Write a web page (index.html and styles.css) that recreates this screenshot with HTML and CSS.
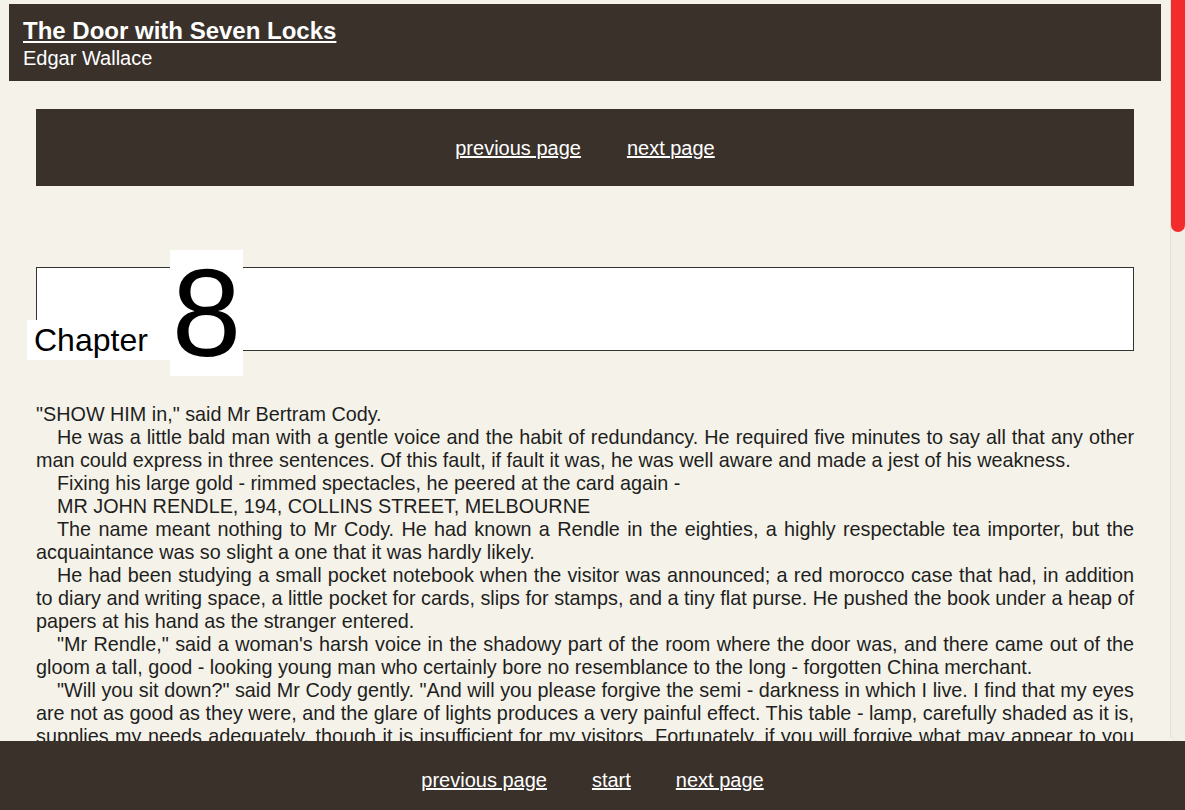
FILE: index.html
```html
<!DOCTYPE html>
<html>
<head>
    <meta charset="UTF-8">
    <title>The Door with Seven Locks - Chapter 8</title>
    <link rel="stylesheet" href="styles.css">
</head>
<body>

	<div class="reader">

	<div class="page">

	    <header class="book_head">
	        <h1><a href="#">The Door with Seven Locks</a></h1>
	        <div class="book_author">Edgar Wallace</div>
	    </header>

	    <div class="chapter">

	        <nav class="pager">
	            <a href="#">previous page</a>
	            <a href="#">next page</a>
	        </nav>

	        <div class="chapter_head">
	            <span class="chapter_label">Chapter</span><span class="chapter_num">8</span>
	        </div>

	        <div class="chapter_text">
	            <p class="first">"SHOW HIM in," said Mr Bertram Cody.</p>
	            <p>He was a little bald man with a gentle voice and the habit of redundancy. He required five minutes to say all that any other man could express in three sentences. Of this fault, if fault it was, he was well aware and made a jest of his weakness.</p>
	            <p>Fixing his large gold - rimmed spectacles, he peered at the card again -</p>
	            <p>MR JOHN RENDLE, 194, COLLINS STREET, MELBOURNE</p>
	            <p>The name meant nothing to Mr Cody. He had known a Rendle in the eighties, a highly respectable tea importer, but the acquaintance was so slight a one that it was hardly likely.</p>
	            <p>He had been studying a small pocket notebook when the visitor was announced; a red morocco case that had, in addition to diary and writing space, a little pocket for cards, slips for stamps, and a tiny flat purse. He pushed the book under a heap of papers at his hand as the stranger entered.</p>
	            <p>"Mr Rendle," said a woman's harsh voice in the shadowy part of the room where the door was, and there came out of the gloom a tall, good - looking young man who certainly bore no resemblance to the long - forgotten China merchant.</p>
	            <p>"Will you sit down?" said Mr Cody gently. "And will you please forgive the semi - darkness in which I live. I find that my eyes are not as good as they were, and the glare of lights produces a very painful effect. This table - lamp, carefully shaded as it is, supplies my needs adequately, though it is insufficient for my visitors. Fortunately, if you will forgive what may appear to you to be a boast, I have very little need of light to recognise a face, and none at all to recognise a voice."</p>
	            <p>Dick Martin sat down in the chair that was pushed forward for him. Of the woman who had shown him in he saw nothing more than a vague shape; he heard the door close softly behind her, and he was alone with the little man at the desk.</p>
	            <p>"You are from Melbourne, Mr Rendle? A beautiful city. I have never been there, but I have always understood that it is a beautiful city, and one which, in the opinion of those best qualified to judge, compares very favourably with any capital in Europe."</p>
	            <p>"I have been in Melbourne," said Dick carefully, "but I cannot claim to be an authority on its beauties. I came to see you on a matter which I think you will find of some interest."</p>
	            <p>Mr Cody folded his plump hands on the blotting - pad and inclined his head. It was a gesture that might have meant anything - attention, politeness, or merely the desire to rest his eyes from the light that fell upon the table.</p>
	            <p>"I am always interested," he said. "It is, if I may say so, one of the few pleasures that are left to a man of my years and my habits. I seldom go out; I see very few people; my correspondence is small. A visitor, therefore, is an event, and an event, however trivial it may prove, is a thing to be welcomed and, if possible, enjoyed."</p>
	            <p>"You knew the late Lord Selford?"</p>
	            <p>For a second the hands on the blotting - pad were still; then one of them moved to the lamp and tilted the shade a little, so that the light fell more fully upon the visitor's face.</p>
	            <p>"Lord Selford? Yes, I knew him - slightly. Very slightly. I was at one time his lordship's agent in a small matter of property, a house in Gloucestershire which he wished to let. That was many years ago, Mr Rendle, many years ago, and my memory, I am afraid, is not what it was."</p>
	            <p>"And his son - the present Lord Selford?"</p>
	            <p>Mr Cody shook his head slowly. "I have never had the pleasure of meeting the present lord. He is, I understand, a great traveller; one hears of him in Africa, in South America, in the East. A restless young man, but no doubt a very estimable one. Why do you ask?"</p>
	            <p>Dick did not answer at once. He was looking past the lamp to the wall behind, where the shadows lay thickest, and he had the uncomfortable sense that somebody stood there, watching and listening, though he could see no one.</p>
	            <p>"Because," he said at last, "I have reason to believe that you are one of the very few people in London who can tell me where he is to be found."</p>
	            <p>The little man laughed softly, and the sound of his laughter was so gentle and so kindly that for a moment Dick doubted the wisdom of his errand. Then Mr Cody leant forward, and the light caught the thick lenses of his spectacles, so that his eyes seemed to vanish behind two discs of white fire.</p>
	            <p>"My dear young man," he said, "you flatter me. You flatter me beyond anything I deserve. I am an old man who lives very quietly in a dark room, and if you had come to ask me the price of a house or the value of a piece of land, I might perhaps have been of service to you. But the whereabouts of Lord Selford - no, no, no. You must go elsewhere for that."</p>
	            <p>He rose as he spoke, and Dick, taking the hint, rose with him. Somewhere in the darkness behind them a door opened, and the harsh voice of the woman said something he did not catch.</p>
	        </div>

	        <nav class="pager pager_bottom">
	            <a href="#">previous page</a>
	            <a href="#">next page</a>
	        </nav>

	    </div>
	</div>

	<div class="scroll_rail">
	    <div class="scroll_thumb"></div>
	</div>

	</div>

	<footer class="foot_nav">
	    <a href="#">previous page</a>
	    <a href="#">start</a>
	    <a href="#">next page</a>
	</footer>

</body>
</html>
```

FILE: styles.css
```css
*{
    margin: 0;
    padding: 0;
}
html,body{
    height: 100%;
}
body{
    display: flex;
    flex-direction: column;
    overflow: hidden;
    background-color: #f5f3e9;
    color: #1e1e1e;
    font-family: "Liberation Sans", Arial, sans-serif;
    font-size: 20px;
    line-height: 23px;
}
a{
    color: #ffffff;
}

/* scroll area + red rail */
.reader{
    flex: 1;
    display: flex;
    min-height: 0;
}
.page{
    flex: 1;
    overflow-y: scroll;
    scrollbar-width: none;
}
.page::-webkit-scrollbar{
    display: none;
}
.scroll_rail{
    width: 14px;
    border-left: 1px solid #e0ded5;
    border-radius: 0 0 7px 7px;
    background-color: #f1efe6;
}
.scroll_thumb{
    height: 232px;
    border-radius: 0 0 7px 7px;
    background-color: #f22c2c;
}

/* book header */
.book_head{
    margin: 4px 9px 0;
    padding: 11px 14px 11px;
    background-color: #3a312b;
    color: #ffffff;
}
.book_head h1{
    font-size: 24px;
    line-height: 32px;
    font-weight: bold;
}

/* chapter */
.chapter{
    padding: 28px 36px 60px;
}
.pager{
    display: flex;
    justify-content: center;
    gap: 46px;
    padding: 28px 0 26px;
    background-color: #3a312b;
}
.pager_bottom{
    margin-top: 60px;
}
.chapter_head{
    display: flex;
    align-items: flex-end;
    height: 82px;
    margin-top: 81px;
    border: 1px solid #333333;
    background-color: #ffffff;
}
.chapter_label{
    margin: 0 0 -10px -10px;
    padding: 2px 22px 2px 7px;
    background-color: #ffffff;
    color: #000000;
    font-size: 32px;
    line-height: 36px;
}
.chapter_num{
    margin-bottom: -26px;
    padding: 0 2px;
    background-color: #ffffff;
    color: #000000;
    font-size: 125px;
    line-height: 126px;
}
.chapter_text{
    margin-top: 52px;
    font-size: 19.8px;
    text-align: justify;
}
.chapter_text p{
    text-indent: 21px;
}
.chapter_text p.first{
    text-indent: 0;
}

/* bottom nav */
.foot_nav{
    display: flex;
    justify-content: center;
    gap: 45px;
    padding: 28px 0 18px;
    background-color: #3a312b;
}
```
